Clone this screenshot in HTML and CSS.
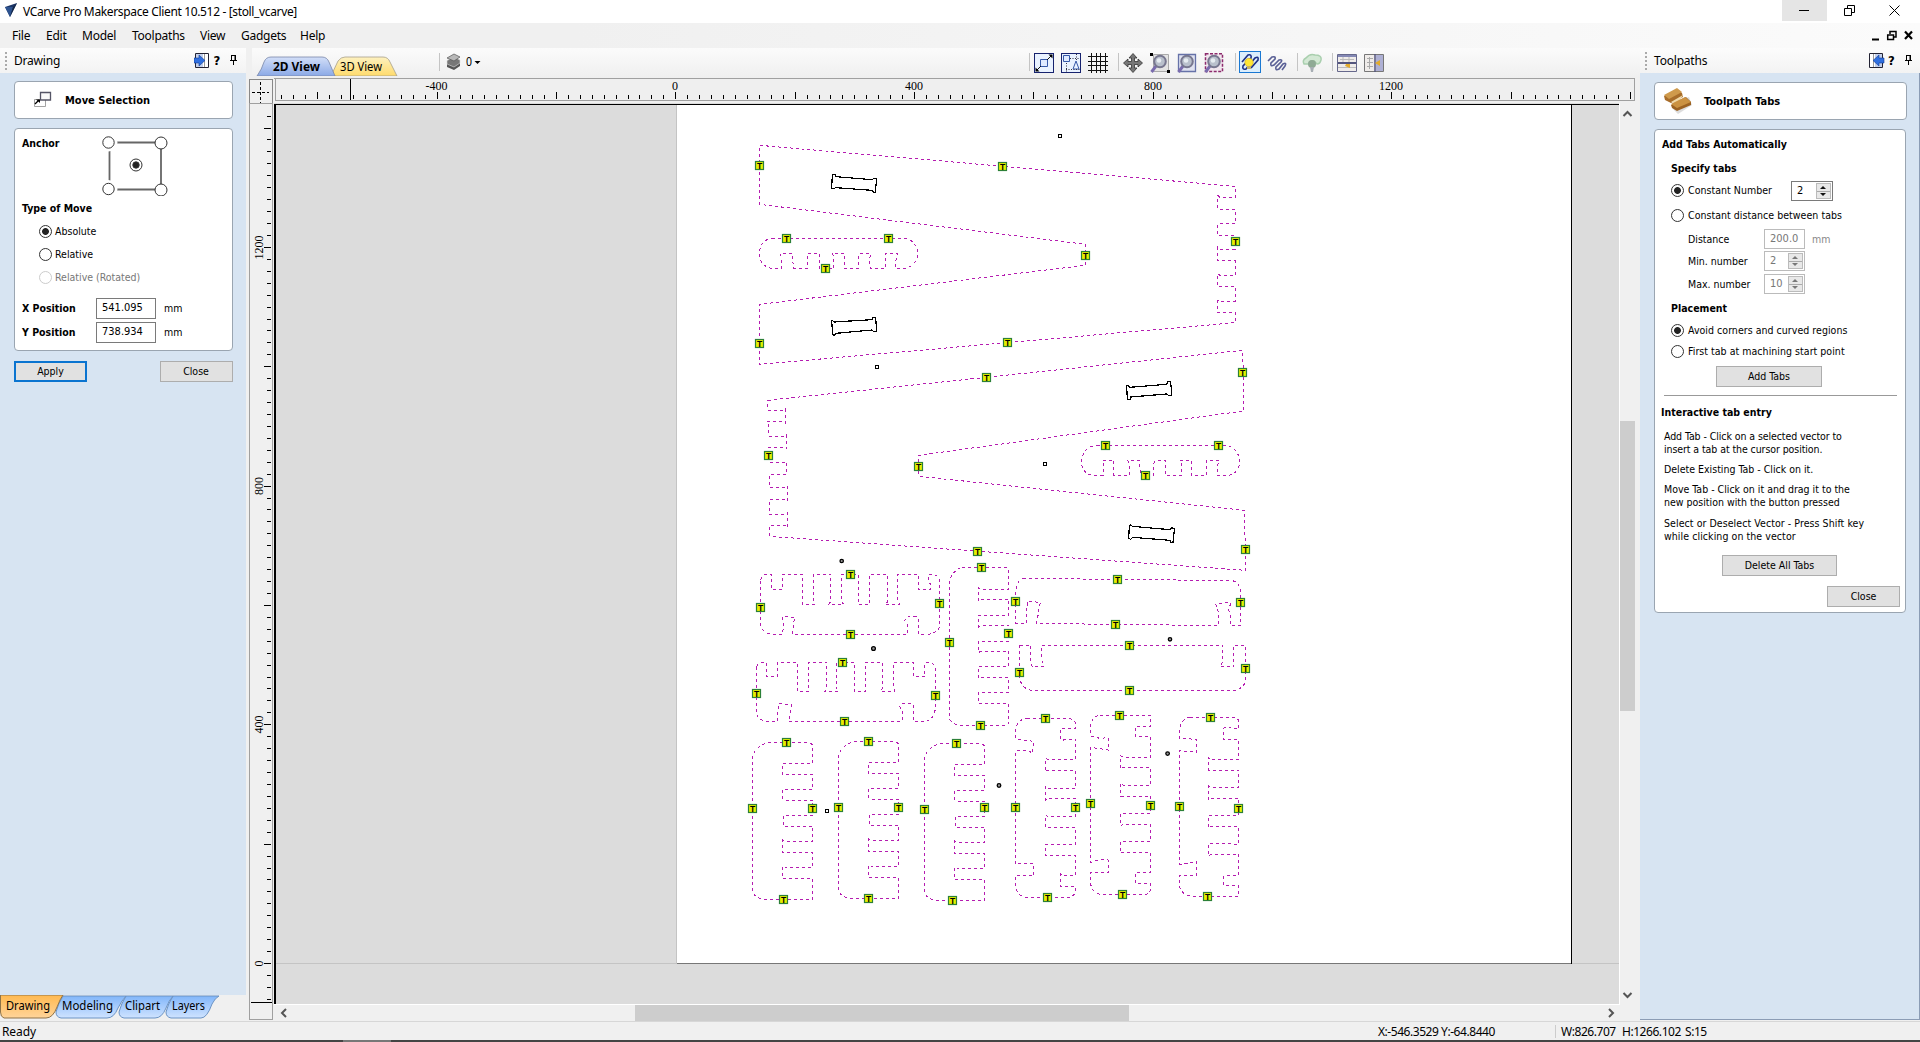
FILE: index.html
```html
<!DOCTYPE html>
<html lang="en">
<head>
<meta charset="utf-8">
<title>VCarve Pro Makerspace Client 10.512 - [stoll_vcarve]</title>
<link rel="stylesheet" href="styles.css">
</head>
<body>
<div class="app">
  <header class="titlebar">
    <svg class="logo" width="14" height="16" viewBox="0 0 14 16"><path d="M1 4L13 0L6 14Z" fill="#1c3566"/><path d="M1 4L9 4L6 14Z" fill="#2e5390"/><path d="M13 0L9 4L6 14Z" fill="#142747"/></svg>
    <span class="title">VCarve Pro Makerspace Client 10.512 - [stoll_vcarve]</span>
    <div class="winbtns">
      <span class="winbtn active"><svg width="11" height="11"><path d="M0 5.500H10" stroke="#000"/></svg></span>
      <span class="winbtn"><svg width="11" height="11"><path d="M.5 3.500H7.500V10.500H.5ZM3.500 3V.5H10.500V7.500H8" stroke="#000" fill="none"/></svg></span>
      <span class="winbtn"><svg width="11" height="11"><path d="M.5 .5L10.500 10.500M10.500 .5L.5 10.500" stroke="#000"/></svg></span>
    </div>
  </header>
  <nav class="menubar">
    <span class="m-file">File</span><span class="m-edit">Edit</span><span class="m-model">Model</span><span class="m-tool">Toolpaths</span><span class="m-view">View</span><span class="m-gad">Gadgets</span><span class="m-help">Help</span>
    <svg class="mdi" width="42" height="12" viewBox="0 0 42 12"><path d="M0 9.500H7" stroke="#000" stroke-width="2"/><path d="M18 4V1.500H24V7H22" fill="none" stroke="#000" stroke-width="1.500"/><path d="M15.700 5H21.500V9.500H15.700Z" fill="none" stroke="#000" stroke-width="1.500"/><path d="M33 1.500L40 9M40 1.500L33 9" stroke="#000" stroke-width="2.200"/></svg>
  </nav>
  <main class="body">
    <aside class="left">
      <div class="dockhead"><i class="grip"></i><span>Drawing</span>
        <svg class="headicons" width="46" height="18" viewBox="0 0 46 18"><path d="M1.500 1.500H14.500V15.500H1.500Z" fill="#fff" stroke="#223" /><path d="M2 2H9V15H2Z" fill="#c3d0ec"/><path d="M10.500 2V15" stroke="#999"/><path d="M0 6H5V3L11 8.500L5 14V11H0Z" fill="#2f6fe0" stroke="#123a90" stroke-width=".6"/><text x="19.500" y="13" class="q">?</text><path d="M37 3.500H42M37.500 3V8M41.500 3V8M41 3V8M36 8.500H43M39.500 9V13" stroke="#000" fill="none"/></svg>
      </div>
      <div class="leftbody">
        <section class="card head"><svg width="20" height="18" viewBox="0 0 20 18"><path d="M1.500 8.500H12.500V15.500H1.500Z" fill="none" stroke="#999" stroke-width=".9"/><path d="M7.500 1.500H17.500V9H7.500Z" fill="#fafafa" stroke="#556" stroke-width="1.300"/><path d="M2 13L6 9" stroke="#000" stroke-width="1.300"/><path d="M3 8.500H7V12Z"/></svg><b>Move Selection</b></section>
        <section class="card move">
          <div class="anchorrow"><b>Anchor</b>
            <svg width="66" height="60" viewBox="0 0 66 60" fill="#fff" stroke="#333"><path d="M7.500 6.500H59V53.500H7.500Z" stroke="#666" stroke-width="1.800"/><circle cx="6.500" cy="6.500" r="7.500" stroke="#fff" stroke-width="3"/><circle cx="6.500" cy="6.500" r="5.700"/><circle cx="59" cy="7" r="6"/><circle cx="6.500" cy="53" r="7.500" stroke="#fff" stroke-width="3"/><circle cx="6.500" cy="53" r="5.700"/><circle cx="59" cy="54" r="6"/><circle cx="34" cy="29" r="6"/><circle cx="34" cy="29" r="3.200" fill="#222"/></svg>
          </div>
          <div class="typerow"><b>Type of Move</b></div>
          <div class="opt"><i class="radio on"></i><span>Absolute</span></div>
          <div class="opt"><i class="radio"></i><span>Relative</span></div>
          <div class="opt dis"><i class="radio"></i><span>Relative (Rotated)</span></div>
          <div class="pos first"><b>X Position</b><span class="field">541.095</span><span>mm</span></div>
          <div class="pos"><b>Y Position</b><span class="field">738.934</span><span>mm</span></div>
        </section>
        <div class="leftbtns"><span class="btn focus">Apply</span><span class="btn">Close</span></div>
      </div>
      <svg class="pagetabs" width="250" height="27" viewBox="0 0 250 27">
        <defs><linearGradient id="blue" x2="0" y2="1"><stop offset="0" stop-color="#82b6fa"/><stop offset="1" stop-color="#cfe3ff"/></linearGradient><linearGradient id="orange" x2="0" y2="1"><stop offset="0" stop-color="#ffb950"/><stop offset="1" stop-color="#ffd49a"/></linearGradient></defs>
        <path d="M173 1H219Q215 3 212 9Q207 23 201 23H171Q166 22 166 17Q168 9 173 1Z" fill="url(#blue)" stroke="#6b93c4"/>
        <path d="M126 1H173Q169 5 166 13Q162 23 155 23H124Q119 22 119 17Q121 9 126 1Z" fill="url(#blue)" stroke="#6b93c4"/>
        <path d="M63 1H126Q122 5 118 13Q114 23 107 23H61Q56 22 56 17Q58 9 63 1Z" fill="url(#blue)" stroke="#6b93c4"/>
        <path d="M.5 0H63Q60 4 57 12Q53 23 46 23H4Q.5 22 .5 17Z" fill="url(#orange)" stroke="#8f7348"/>
        <g class="ui"><text x="6" y="15" textLength="44" lengthAdjust="spacingAndGlyphs">Drawing</text><text x="62" y="15" textLength="51" lengthAdjust="spacingAndGlyphs">Modeling</text><text x="125" y="15" textLength="35" lengthAdjust="spacingAndGlyphs">Clipart</text><text x="172" y="15" textLength="33" lengthAdjust="spacingAndGlyphs">Layers</text></g>
      </svg>
    </aside>

    <section class="center">
      <div class="toolbar">
        <svg class="viewtabs" width="150" height="27" viewBox="0 0 150 27">
          <defs><linearGradient id="t2" x2="0" y2="1"><stop offset="0" stop-color="#d3dff8"/><stop offset="1" stop-color="#8ba9e6"/></linearGradient><linearGradient id="t3" x2="0" y2="1"><stop offset="0" stop-color="#fdf1c0"/><stop offset="1" stop-color="#ffdb6c"/></linearGradient></defs>
          <path d="M78 27L85 12Q88 8 92 8H130Q135 8 137 13L144 27Z" fill="url(#t3)" stroke="#a7a08a" stroke-width=".8"/>
          <path d="M4 27Q9 20 11 13Q13 8 18 8H69Q74 8 76 13L82 27Z" fill="url(#t2)" stroke="#7887a8" stroke-width=".8"/>
          <g class="ui view"><text x="20" y="22" font-weight="700" textLength="47" lengthAdjust="spacingAndGlyphs">2D View</text><text x="87" y="22" textLength="42" lengthAdjust="spacingAndGlyphs">3D View</text></g>
        </svg>
        <i class="sep s0"></i>
        <svg class="layers" width="40" height="20" viewBox="0 0 40 20"><path d="M2 12L8 9L15 11V14L9 18L2 15Z" fill="#555"/><path d="M2 8.500L9 5L15 8V11L9 15L2 12Z" fill="#777" stroke="#ddd" stroke-width=".6"/><path d="M2 6L9 2L15 5L9 9Z" fill="#b8b8b8" stroke="#555" stroke-width=".7"/><text x="21" y="14" class="ui" textLength="6" lengthAdjust="spacingAndGlyphs">0</text><path d="M29.500 9H35.500L32.500 12Z"/></svg>
        <i class="sep s1"></i>
        <svg class="ic" viewBox="0 0 20 20"><rect x=".5" y=".5" width="19" height="19" fill="#e9f2ff" stroke="#16226e"/><path d="M6.500 6.500H13.500V13.500H6.500Z" fill="#dfeaff" stroke="#3558a8"/><path d="M2 18L7 13M13 7L18 2" stroke="#111"/><path d="M1.500 14.500V18.500H5.500ZM14.500 1.500H18.500V5.500Z"/></svg>
        <svg class="ic" viewBox="0 0 20 20"><rect x=".5" y=".5" width="19" height="19" fill="#e9f2ff" stroke="#16226e"/><path d="M2.500 2.500H8.500V8.500H2.500Z" fill="#dfeaff" stroke="#3558a8"/><path d="M12 16L15 8L18 16Z" fill="none" stroke="#3558a8"/><path d="M9 5.500H19M5.500 10V19M5 16.500H19M15.500 1V8" stroke="#334" stroke-dasharray="1 1.500"/></svg>
        <svg class="ic" viewBox="0 0 20 20"><path d="M3.500 0V20M8.500 0V20M12.500 0V20M17.500 0V20M0 3.500H20M0 8.500H20M0 12.500H20M0 17.500H20" stroke="#111"/></svg>
        <i class="sep s2"></i>
        <svg class="ic" viewBox="0 0 20 20"><path d="M10 .5L14 5H11.500V8.500H15V6L19.500 10L15 14V11.500H11.500V15H14L10 19.500L6 15H8.500V11.500H5V14L.5 10L5 6V8.500H8.500V5H6Z" fill="#777" stroke="#333" stroke-width=".8"/></svg>
        <svg class="ic" viewBox="0 0 20 20"><path d="M3.500 1.500H18.500V18.500H3.500Z" fill="#e4e4e4" stroke="#aaa"/><path d="M0 0H3V3H0ZM17 17H20V20H17Z"/><path d="M1.500 19L6 13" stroke="#7a6cae" stroke-width="3"/><circle cx="10" cy="8.500" r="5.800" fill="#b9c0cc" stroke="#77778f" stroke-width="2"/><circle cx="9" cy="7.500" r="2.300" fill="#e6ecf1"/></svg>
        <svg class="ic" viewBox="0 0 20 20"><path d="M1.500 1.500H18.500V18.500H1.500Z" fill="#dfe2f0" stroke="#6672a8" stroke-width="1.300"/><path d="M1.500 19L6 13" stroke="#7a6cae" stroke-width="3"/><circle cx="10" cy="8.500" r="5.800" fill="#b9c0cc" stroke="#77778f" stroke-width="2"/><circle cx="9" cy="7.500" r="2.300" fill="#e6ecf1"/></svg>
        <svg class="ic" viewBox="0 0 20 20"><path d="M1.500 .8H18.500V18.500H1.500Z" fill="#f1e6ee" stroke="#8c2a6c" stroke-width="1.500" stroke-dasharray="3 1.500"/><path d="M1.500 19L6 13" stroke="#7a6cae" stroke-width="3"/><circle cx="10" cy="8.500" r="5.800" fill="#b9c0cc" stroke="#77778f" stroke-width="2"/><circle cx="9" cy="7.500" r="2.300" fill="#e6ecf1"/></svg>
        <i class="sep s3"></i>
        <svg class="snap" viewBox="0 0 22 22"><rect x=".5" y=".5" width="21" height="21" fill="#dceefc" stroke="#1a78d2"/><path d="M3 11L9 4Q13 3 12 7L4 15Q3 19 7 18L16 7Q20 5 19 9L12 17" fill="none" stroke="#1c2f86" stroke-width="1.600"/><circle cx="10" cy="11.500" r="4.200" fill="#ffe636" stroke="#c9a21c" stroke-width=".6"/><path d="M8 15H12V18H8Z" fill="#c7b263"/></svg>
        <svg class="ic" viewBox="0 0 20 20"><path d="M1 8L5 4Q9 3 8 6L4 10Q3 14 7 12L12 7Q16 6 14 9L9 14Q8 18 12 16L16 11Q20 9 18 13L15 17" fill="none" stroke="#5a6096" stroke-width="1.600"/></svg>
        <i class="sep s4"></i>
        <svg class="ic" viewBox="0 0 20 20"><path d="M2 11Q0 7 4 5Q8 0 13 2Q20 2 19 7Q18 11 15 11L12 8Q8 7 7 11Z" fill="#d3e8d4" stroke="#a9cfae" stroke-width="1.500"/><circle cx="10" cy="11" r="4" fill="#8faa95"/><path d="M8 14H12L11 19H9Z" fill="#a7aeb4"/></svg>
        <i class="sep s5"></i>
        <svg class="ic" viewBox="0 0 20 20"><path d="M.5 1.500H19.500V18.500H.5Z" fill="#efecea" stroke="#66688c"/><path d="M1 2H19V4H1Z" fill="#8488b4"/><path d="M1 10H19" stroke="#53557d" stroke-width="2"/><path d="M3 6.500H17M6 4V9M12 4V9M1 14.500H19" stroke="#bbb"/><path d="M9 11H13V15L8 13Z" fill="#e2ab2c"/></svg>
        <svg class="ic" viewBox="0 0 20 20"><path d="M.5 1.500H19.500V18.500H.5Z" fill="#efecea" stroke="#777"/><path d="M12 2H19V18H12Z" fill="#aeb0d4"/><path d="M11 1V19" stroke="#53557d" stroke-width="1.500"/><path d="M3 5.500H9M3 9.500H9M3 13.500H9M5.500 4V16" stroke="#aaa"/><path d="M11 10L16 7V13Z" fill="#e2ab2c"/></svg>
      </div>

      <div class="workspace">
        <svg class="corner" width="24" height="24" viewBox="0 0 24 24" shape-rendering="crispEdges"><path d="M.5 24V.5H23.500V24" fill="#f0f0f0" stroke="#888"/><path d="M11.500 3V24M3 13.500H20" stroke="#000" stroke-dasharray="3 2"/></svg>
        <svg class="hruler" width="1361" height="24" viewBox="274 79 1361 24" shape-rendering="crispEdges">
          <path d="M275 79.500H1634.500V101.500H275.500Z" fill="#efefef" stroke="#a0a0a0"/>
          <g id="hticks" stroke="#000"></g><path d="M350.500 80V101" stroke="#000"/>
          <g class="rl" text-anchor="middle"><text x="436.500" y="91">-400</text><text x="675" y="91">0</text><text x="914" y="91">400</text><text x="1153" y="91">800</text><text x="1391" y="91">1200</text></g>
        </svg>
        <svg class="vruler" width="24" height="917" viewBox="249 103 24 917" shape-rendering="crispEdges">
          <path d="M249.500 103.500H272.500V1019.500H249.500Z" fill="#f0f0f0" stroke="#a0a0a0"/>
          <g id="vticks" stroke="#000"></g><path d="M251 1002.500H272" stroke="#000"/>
          <g class="rl" text-anchor="middle"><text transform="translate(263 247.500)rotate(-90)">1200</text><text transform="translate(263 486)rotate(-90)">800</text><text transform="translate(263 724.500)rotate(-90)">400</text><text transform="translate(263 963.500)rotate(-90)">0</text></g>
        </svg>
        <svg class="canvas" width="1346" height="901" viewBox="274 103 1346 901">
          <defs>
            <g id="sq"><rect x="-1.500" y="-1.500" width="3" height="3" fill="#fff" stroke="#000"/></g>
            <path id="comb" class="part" d="M85 127H205Q218 130 218 140V190H128V223H218V268H128V295L137 301H218V346H131V382L137 379H218V424H137L128 420V457H218V502H137L128 498V535H218V598H70Q38 590 38 570V170Q45 140 85 127Z"/>
          </defs>
          <rect x="274" y="103" width="1346" height="901" fill="#dcdcdc"/>
          <rect x="677" y="104" width="894" height="859" fill="#fff"/>
          <g shape-rendering="crispEdges" fill="none">
            <path d="M676.500 104V963M276 963.500H1620" stroke="#c4c4c4"/><path d="M677 963.500H1572" stroke="#777"/><path d="M1571.500 104V964" stroke="#000"/><path d="M275 1004V104H1620" stroke="#000" stroke-width="2"/><path d="M274 103.500H1620" stroke="#dcdcdc"/>
          </g>
          <g class="vec">
            <g transform="translate(740 120)scale(.33333)">
              <path class="part" d="M59 76L1486 199V232H1440L1434 227V268H1486V310H1434V346H1486V388H1440L1434 382V422H1486V466H1440L1434 460V499H1486V544H1440L1434 541V577H1486V608L59 733V553L1036 436V373L59 253Z"/>
              <path class="part" d="M97 355H490A43 45 0 0 1 490 445H467V425L472 400H436V445H391L388 425L391 406V400H360L355 406V445H313V400H276L282 412V445H238V400H202V445H160L157 400H120L124 412V445H97A39 45 0 0 1 97 355"/>
              <path class="part k" d="M277 163L286 164L287 170L396 179L402 175L410 176L406 217L399 216L396 211L287 203L281 206L275 205ZM277 601L282 606L396 599L399 593L407 592L410 634L400 634L396 630L288 640L283 646L278 644L275 602Z"/>
            </g>
            <g transform="translate(740 340)scale(.33333)">
              <path class="part" d="M83 181L1508 31V60L1510 90V213L536 346V409L1514 511V570L1517 630V691L89 589V556H136L142 562V518L136 523H89V478H136L142 484V438L136 442H89V403H136L140 405V367H86V322H134L140 325V285L134 289H86V247L83 245H131L136 250V207L131 211H83Z"/>
              <path class="part" d="M1070 316H1455C1485 318 1499 345 1499 365C1499 385 1485 404 1465 406H1433V375L1439 361H1400V406H1355V361H1322L1325 372V406H1276V361H1246L1240 375V406H1202L1198 361H1163L1168 372V406H1121V361H1088L1090 375V406H1055C1035 400 1024 385 1024 365C1026 340 1040 318 1070 316Z"/>
              <path class="part k" d="M1160 137L1166 136L1168 142L1280 133L1283 125L1292 124L1295 165L1286 166L1280 162L1171 171V178H1162ZM1172 554L1177 559L1290 569L1295 563L1303 567L1300 606L1293 607L1290 601L1178 592L1172 598L1166 595L1168 560Z"/>
            </g>
            <g transform="translate(740 560)scale(.33333)">
              <path class="part" d="M62 60Q66 44 80 43H94V88H128V43H187V133H224L221 122V43H272V125L266 133H311L305 125V43H355V133H389V43H443V125L436 133H479L473 122V43H535V88H572V72L566 66V43H580Q598 48 599 62V200Q590 222 560 223H536V180L529 170H505L493 182L502 190V223H158L161 185L166 172L128 170L131 200L127 223H100Q64 222 62 190Z"/>
              <path class="part" d="M50 320Q54 307 65 307H79V349H113V307H172V394H206V307H260V385L254 394H296L290 385V307H344V394H377V307H428V385L422 394H464L461 380V307H520V349H556L553 340V312Q560 307 568 307Q586 312 587 325V440Q582 482 555 484H520V432L487 431L479 440L487 455V484H146L152 455L155 435L116 430L113 470V484H80Q50 478 50 460Z"/>
              <path class="part" d="M665 22H795Q806 24 806 32V88H722L716 83V123L722 118H806V166H716V201L722 196H806V244H716V278L722 274H806V319H716V356L722 352H806V397H716V430H806V490Q800 496 790 496H660Q630 490 629 475V60Q640 30 665 22Z"/>
            </g>
            <g transform="translate(1000 560)scale(.33333)">
              <path class="part" d="M68 56H240L245 58H520L540 61H695Q720 68 722 95V196H692V160L686 152L692 129H665L647 133L656 160V196H520L500 193H255L243 190H110L116 155V145L122 127L83 124L80 155V190H47V100Q50 60 68 56Z"/>
              <path class="part" d="M59 256H92V300L97 321H131L125 300V256H669V300L662 321H701V256H737V365Q725 390 700 391H95Q62 385 59 350Z"/>
            </g>
            <g transform="translate(740 700)scale(.33333)"><use href="#comb"/></g>
            <g transform="translate(826 699)scale(.33333)"><use href="#comb"/></g>
            <g transform="translate(912 701)scale(.33333)"><use href="#comb"/></g>
            <g transform="translate(1000 700)scale(.33333)">
              <path class="part" d="M80 55H205Q227 60 227 75V85H182V118L188 121L195 118H227V178H142L137 175V216L142 211H227V265H142L137 260V300L142 295H227V349H142L137 344V382H227V433H137V466H227V526H190L182 522V559H227V575Q222 590 205 592H80Q50 588 47 560V526H95L100 528V490L70 489L47 493V152H85L98 160L101 124L47 118V90Q52 58 80 55Z"/>
              <path class="part" d="M300 46H452V79H407V109H452V172H370L362 168V207L370 202H452V256H370L362 250V289H452V340H362V378L370 373H452V424H362V460L370 457H452V517H407V550H452V570Q447 583 435 583H300Q274 575 272 550V517H325V480L300 479L272 487V142L325 150V113L300 115L272 109V75Q278 48 300 46Z"/>
              <path class="part" d="M570 52H705Q716 55 716 65V88L680 82L670 85V118H716V178H632L626 173V211H716V262H632L626 258V300L632 295H716V346H626V384L632 379H716V433L626 429V468L632 463H716V526H672V556H716V589H575Q543 583 539 560V526H590V485L539 493V152L590 157V118L539 115V85Q545 55 570 52Z"/>
            </g>
          </g>
          <g shape-rendering="crispEdges"><use href="#sq" x="1060" y="136"/><use href="#sq" x="877" y="367"/><use href="#sq" x="1045" y="464"/><use href="#sq" x="827" y="811"/></g>
          <g fill="#999" stroke="#000" stroke-width="1.300"><circle cx="841.700" cy="561" r="1.700"/><circle cx="873.500" cy="648.500" r="1.900"/><circle cx="1170" cy="639.300" r="1.700"/><circle cx="999" cy="785.500" r="1.800"/><circle cx="1167.600" cy="753.600" r="1.800"/></g>
          <g id="tabs"></g>
        </svg>
        <div class="vscroll"><svg width="15" height="15"><path d="M3.500 9L7.500 5L11.500 9" fill="none" stroke="#555" stroke-width="2"/></svg><i></i><svg width="15" height="15"><path d="M3.500 5L7.500 9L11.500 5" fill="none" stroke="#555" stroke-width="2"/></svg></div>
        <div class="hscroll"><svg width="16" height="16"><path d="M10 4L6 8L10 12" fill="none" stroke="#555" stroke-width="2"/></svg><i></i><svg width="16" height="16"><path d="M6 4L10 8L6 12" fill="none" stroke="#555" stroke-width="2"/></svg></div>
      </div>
    </section>

    <aside class="right">
      <div class="dockhead"><i class="grip"></i><span>Toolpaths</span>
        <svg class="headicons" width="46" height="18" viewBox="0 0 46 18"><path d="M.5 1.500H13.500V15.500H.5Z" fill="#fff" stroke="#223"/><path d="M6 2H13V15H6Z" fill="#c3d0ec"/><path d="M4.500 2V15" stroke="#999"/><path d="M15 6H10V3L4 8.500L10 14V11H15Z" fill="#2f6fe0" stroke="#123a90" stroke-width=".6"/><text x="19" y="13" class="q">?</text><path d="M37 3.500H42M37.500 3V8M41.500 3V8M41 3V8M36 8.500H43M39.500 9V13" stroke="#000" fill="none"/></svg>
      </div>
      <div class="rightbody">
        <section class="card head"><svg width="30" height="28" viewBox="0 0 30 28"><path d="M9 16L26 10L29 18L15 27L10 22Z" fill="#bbb" opacity=".5"/><path d="M1 9L14 2L19 6L20 10L8 16L2 13Z" fill="#a86d2a"/><path d="M1 8L14 1L19 5L6 12Z" fill="#cf9a4c"/><path d="M8 15L20 8L17 13L11 16Z" fill="#f0d9a8"/><path d="M8 18L23 10L28 15V18L14 24L9 21Z" fill="#9c6222"/><path d="M8 17L22 10L28 15L14 21Z" fill="#cb9242"/></svg><b>Toolpath Tabs</b></section>
        <section class="card tabs">
          <div class="r r1"><b>Add Tabs Automatically</b></div>
          <div class="r r2"><b>Specify tabs</b></div>
          <div class="r r3"><i class="radio on"></i><span>Constant Number</span><span class="field spin">2<i class="ud"></i></span></div>
          <div class="r r4"><i class="radio"></i><span>Constant distance between tabs</span></div>
          <div class="r r5 sub"><span>Distance</span><span class="field off">200.0</span><em>mm</em></div>
          <div class="r r6 sub"><span>Min. number</span><span class="field off spin">2<i class="ud"></i></span></div>
          <div class="r r7 sub"><span>Max. number</span><span class="field off spin">10<i class="ud"></i></span></div>
          <div class="r r8"><b>Placement</b></div>
          <div class="r r9"><i class="radio on"></i><span>Avoid corners and curved regions</span></div>
          <div class="r r10"><i class="radio"></i><span>First tab at machining start point</span></div>
          <span class="btn add">Add Tabs</span>
          <hr>
          <div class="r r11"><b>Interactive tab entry</b></div>
          <p class="tight">Add Tab - Click on a selected vector to<br>insert a tab at the cursor position.</p>
          <p>Delete Existing Tab - Click on it.</p>
          <p>Move Tab - Click on it and drag it to the<br>new position with the button pressed</p>
          <p class="loose">Select or Deselect Vector - Press Shift key<br>while clicking on the vector</p>
          <span class="btn del">Delete All Tabs</span>
          <span class="btn cls">Close</span>
        </section>
      </div>
    </aside>
  </main>
  <footer class="status"><span class="ready">Ready</span><span class="xy">X:-546.3529 Y:-64.8440</span><span class="w">W:826.707</span><span class="h">H:1266.102</span><span class="s">S:15</span></footer>
  <div class="bottomedge"></div>
</div>
<script src="main.js"></script>
</body>
</html>
```
FILE: main.js
```js
const NS = 'http://www.w3.org/2000/svg';
const STEP = 238.7 / 20;

// Ruler ticks: one per 20 mm, longer every 200 mm
let h = '', v = '';
for (let i = -33; i <= 80; i++) {
  const x = Math.floor(675.8 + i * STEP) + 0.5;
  if (x > 276 && x < 1632) h += `M${x} ${i % 10 ? 96 : 93}V100`;
  const y = Math.floor(963.5 - i * STEP) + 0.5;
  if (y > 106 && y < 1001) v += `M${i % 10 ? 267 : 264} ${y}H271`;
}
for (const [id, d] of [['hticks', h], ['vticks', v]]) {
  const p = document.createElementNS(NS, 'path');
  p.setAttribute('d', d);
  document.getElementById(id).append(p);
}

// Machining tabs placed on the selected vectors
const tabs = [
  [759,165],[1002,166],[786,238],[888,238],[825,268],[1085,255],[1235,241],[759,343],[1007,342],
  [986,377],[1242,372],[768,455],[918,466],[1105,445],[1218,445],[1145,475],[977,551],[1245,549],
  [760,607],[850,574],[939,603],[850,634],[756,693],[842,662],[935,695],[844,721],
  [981,567],[949,642],[1008,633],[980,725],
  [1117,579],[1015,601],[1115,624],[1240,602],[1129,645],[1019,672],[1245,668],[1129,690],
  [786,742],[752,808],[812,808],[783,899],[868,741],[838,807],[898,807],[868,898],[956,743],[924,809],[984,807],[952,900],
  [1045,718],[1015,807],[1075,807],[1047,897],[1119,715],[1090,803],[1150,805],[1122,894],[1210,717],[1179,806],[1238,808],[1207,896]
];
const layer = document.getElementById('tabs');
for (const [x, y] of tabs) {
  const g = document.createElementNS(NS, 'g');
  g.setAttribute('transform', `translate(${x + 0.5} ${y + 0.5})`);
  g.innerHTML = '<rect x="-4" y="-4" width="8" height="8"/><text y="3">T</text>';
  layer.append(g);
}
```
FILE: styles.css
```css
* { box-sizing: border-box; }
body { margin: 0; overflow: hidden; background: #f0f0f0; color: #000; font: 10.5px/13px "DejaVu Sans Condensed", "Noto Sans", sans-serif; }
svg { display: block; flex: none; }
.app { width: 1920px; height: 1042px; display: grid; grid-template-rows: 23px 25px 973px 19px 2px; }
.titlebar, .menubar, .status, .ui, .dockhead { font-family: "Noto Sans", sans-serif; font-size: 12px; }
.titlebar { display: flex; align-items: center; background: #fff; padding-left: 4px; }
.logo { margin: -2px 5px 0 0; }
.title { letter-spacing: -.35px; line-height: 22px; }
.winbtns { margin-left: auto; display: flex; align-self: flex-start; }
.winbtn { width: 45px; height: 21px; display: flex; align-items: center; justify-content: center; }
.winbtn.active { background: #e5e5e5; }
.winbtn:last-child { margin-right: 3px; }
.menubar { display: flex; align-items: center; padding-left: 12px; background: linear-gradient(90deg, #f0f0f0 30%, #fbfbfb); letter-spacing: -.25px; }
.m-file { width: 34px; } .m-edit { width: 36px; } .m-model { width: 50px; } .m-tool { width: 68px; }
.m-view { width: 41px; } .m-gad { width: 59px; }
.mdi { margin: 0 6px 0 auto; }
.body { display: grid; grid-template-columns: 249px 1391px 280px; }
.left { display: grid; grid-template-rows: 25px 922px 26px; }
.dockhead { display: flex; align-items: center; background: linear-gradient(#fcfcfc, #f3f3f3); padding: 0 5px; height: 25px; letter-spacing: -.2px; }
.left .dockhead { margin-right: 4px; padding-right: 6px; }
.grip { width: 2px; height: 18px; margin-right: 7px; background: repeating-linear-gradient(#aaa 0 2px, #f7f7f7 2px 4px); }
.headicons { margin-left: auto; }
.q { font: 700 13px "DejaVu Sans Condensed", "Noto Sans", sans-serif; }
.leftbody { background: #d7e4f2; margin-right: 4px; padding: 8px 12px 0 14px; }
.leftbody > * { width: 218.500px; }
.card { background: #fff; border: 1px solid #9aa5b1; border-radius: 4px; }
.card.head { display: flex; align-items: center; height: 38px; font-size: 11px; }
.left .card.head { padding-left: 18px; gap: 12px; }
.move { height: 223px; margin-top: 9px; padding: 7px 0 0 7px; }
.anchorrow { display: flex; height: 66px; }
.anchorrow b { width: 79.500px; padding-top: 1px; }
.typerow { height: 17.500px; }
.opt { display: flex; align-items: center; height: 23.200px; padding-left: 17px; gap: 3px; }
.radio { width: 13px; height: 13px; border: 1px solid #333; border-radius: 50%; background: #fff; flex: none; }
.radio.on { background: radial-gradient(circle, #222 0 3px, #fff 3.800px); }
.dis { color: #777; } .dis .radio { border-color: #ccc; }
.pos { display: flex; align-items: center; height: 21px; margin-top: 3px; }
.pos.first { margin-top: 8.500px; }
.pos b { width: 74px; }
.field { border: 1px solid #7a7a7a; background: #fff; height: 21px; width: 60px; padding-left: 5px; line-height: 18px; margin-right: 8px; font-size: 11px; }
.leftbtns { display: flex; justify-content: space-between; margin-top: 10px; }
.btn { display: block; width: 73px; height: 21px; border: 1px solid #adadad; background: #e1e1e1; text-align: center; line-height: 19px; }
.btn.focus { border: 2px solid #0a74d0; line-height: 17px; }
.center { display: grid; grid-template-rows: 30px 943px; }
.toolbar { display: flex; align-items: center; background: linear-gradient(#fbfbfb, #efefef); padding-bottom: 2px; margin-left: 3px; }
.viewtabs { margin-left: 1px; margin-top: 1px; }
.view { font-size: 13px; }
.sep { width: 1px; height: 18px; background: #c4c4c4; flex: none; }
.s0 { margin: 0 5px 0 36px; } .layers { width: 40px; }
.s1 { margin: 0 4px 0 544px; } .s2 { margin: 0 4px 0 10px; } .s3 { margin: 0 3px 0 11px; } .s4 { margin: 0 4px 0 10px; } .s5 { margin: 0 4px 0 10px; }
.ic { width: 20px; height: 20px; margin-top: 1px; }
.ic + .ic { margin-left: 7px; }
.snap { width: 22px; height: 22px; } .snap + .ic { margin-left: 6px; }
.workspace { display: grid; grid-template-columns: 25px 1346px 20px; grid-template-rows: 25px 901px 17px; }
.corner { margin-top: 1px; }
.hruler { grid-column: 2 / 4; }
.vruler { grid-row: 2 / 4; grid-column: 1; }
.rl { font: 12px "Liberation Serif", serif; }
.canvas { grid-column: 2; grid-row: 2; }
.part { vector-effect: non-scaling-stroke; }
.vec { fill: none; stroke: #b51cb0; stroke-width: 1; stroke-dasharray: 3 3; shape-rendering: crispEdges; }
.vec .k { stroke: #000; stroke-dasharray: none; stroke-width: 1.200; }
#tabs rect { fill: #e6f000; stroke: #2c8038; stroke-width: 1.200; }
#tabs text { font: 700 8.500px "Liberation Sans", sans-serif; text-anchor: middle; }
.vscroll { grid-column: 3; grid-row: 2; display: flex; flex-direction: column; width: 16px; margin-left: -1px; padding: 4px 0 1px; border-left: 1px solid #fff; }
.vscroll i { height: 290px; background: #cdcdcd; margin: 299px 0 auto; }
.hscroll { grid-column: 2; display: flex; padding: 0 1px 0 2px; border-top: 1px solid #fff; }
.hscroll i { width: 494px; background: #cdcdcd; margin: 0 auto 0 343px; }
.right { display: grid; grid-template-rows: 25px 947px 1px; }
.rightbody { background: #d7e4f2; border-right: 1px solid #8b9cb5; border-bottom: 1px solid #8b9cb5; padding: 9px 12px 0 14px; }
.right .card.head { padding-left: 8px; gap: 11px; }
.card.tabs { height: 484px; margin-top: 9px; display: flex; flex-direction: column; width: 252px; }
.r { display: flex; align-items: center; flex: none; padding-left: 16px; height: 20px; }
.r .radio { margin-right: 4px; }
.r1 { margin-top: 4px; padding-left: 7px; } .r2 { margin-top: 4px; } .r3 { margin-top: 2px; height: 21px; } .r4 { margin-top: 4px; }
.r5 { margin-top: 4px; } .r6 { margin-top: 2px; } .r7 { margin-top: 3px; } .r8 { margin-top: 4px; } .r9 { margin-top: 2px; } .r10 { margin-top: 1px; }
.r3, .r4, .r9, .r10 { letter-spacing: .04px; }
.sub { padding-left: 33px; } .sub > span:first-child { width: 76px; }
.sub em { font-style: normal; color: #888; }
.off { color: #777; border-color: #bbb; width: 41px; height: 20px; margin-right: 7px; }
.spin { display: flex; justify-content: space-between; }
.r3 .spin { margin-left: 19px; width: 42px; height: 20px; }
.ud { width: 15px; margin: 1px; border: 1px solid #bbb; background: linear-gradient(#e8e8e8 0 7px, #aaa 7px 8px, #e8e8e8 8px); position: relative; }
.ud::before, .ud::after { content: ""; position: absolute; left: 3px; border: 3px solid transparent; }
.ud::before { top: -1px; border-bottom-color: #111; } .ud::after { bottom: -1px; border-top-color: #111; }
.off .ud::before { border-bottom-color: #777; } .off .ud::after { border-top-color: #777; }
.add { width: 106px; margin: 5px 0 0 61px; flex: none; }
hr { margin: 8px 8px 0 9px; border: 0; border-top: 1px solid #999; flex: none; }
.r11 { padding-left: 6px; margin: 6px 0 5px; }
p { margin: 3px 0 4.200px 9px; white-space: nowrap; }
.tight { letter-spacing: -.08px; }
.loose { letter-spacing: .07px; }
.del { width: 115px; margin: 8px 0 0 67px; flex: none; }
.cls { margin: 10px 0 0 172px; flex: none; }
.status { display: flex; align-items: center; border-top: 1px solid #d7d7d7; letter-spacing: -.45px; padding-left: 2px; }
.ready { width: 1376px; letter-spacing: -.1px; } .xy { width: 177px; } .w { width: 67px; padding-left: 5px; border-left: 1px solid #ccc; } .h { width: 63px; }
.bottomedge { background: linear-gradient(90deg, #444 343px, #777 343px 391px, #444 391px); }
```
